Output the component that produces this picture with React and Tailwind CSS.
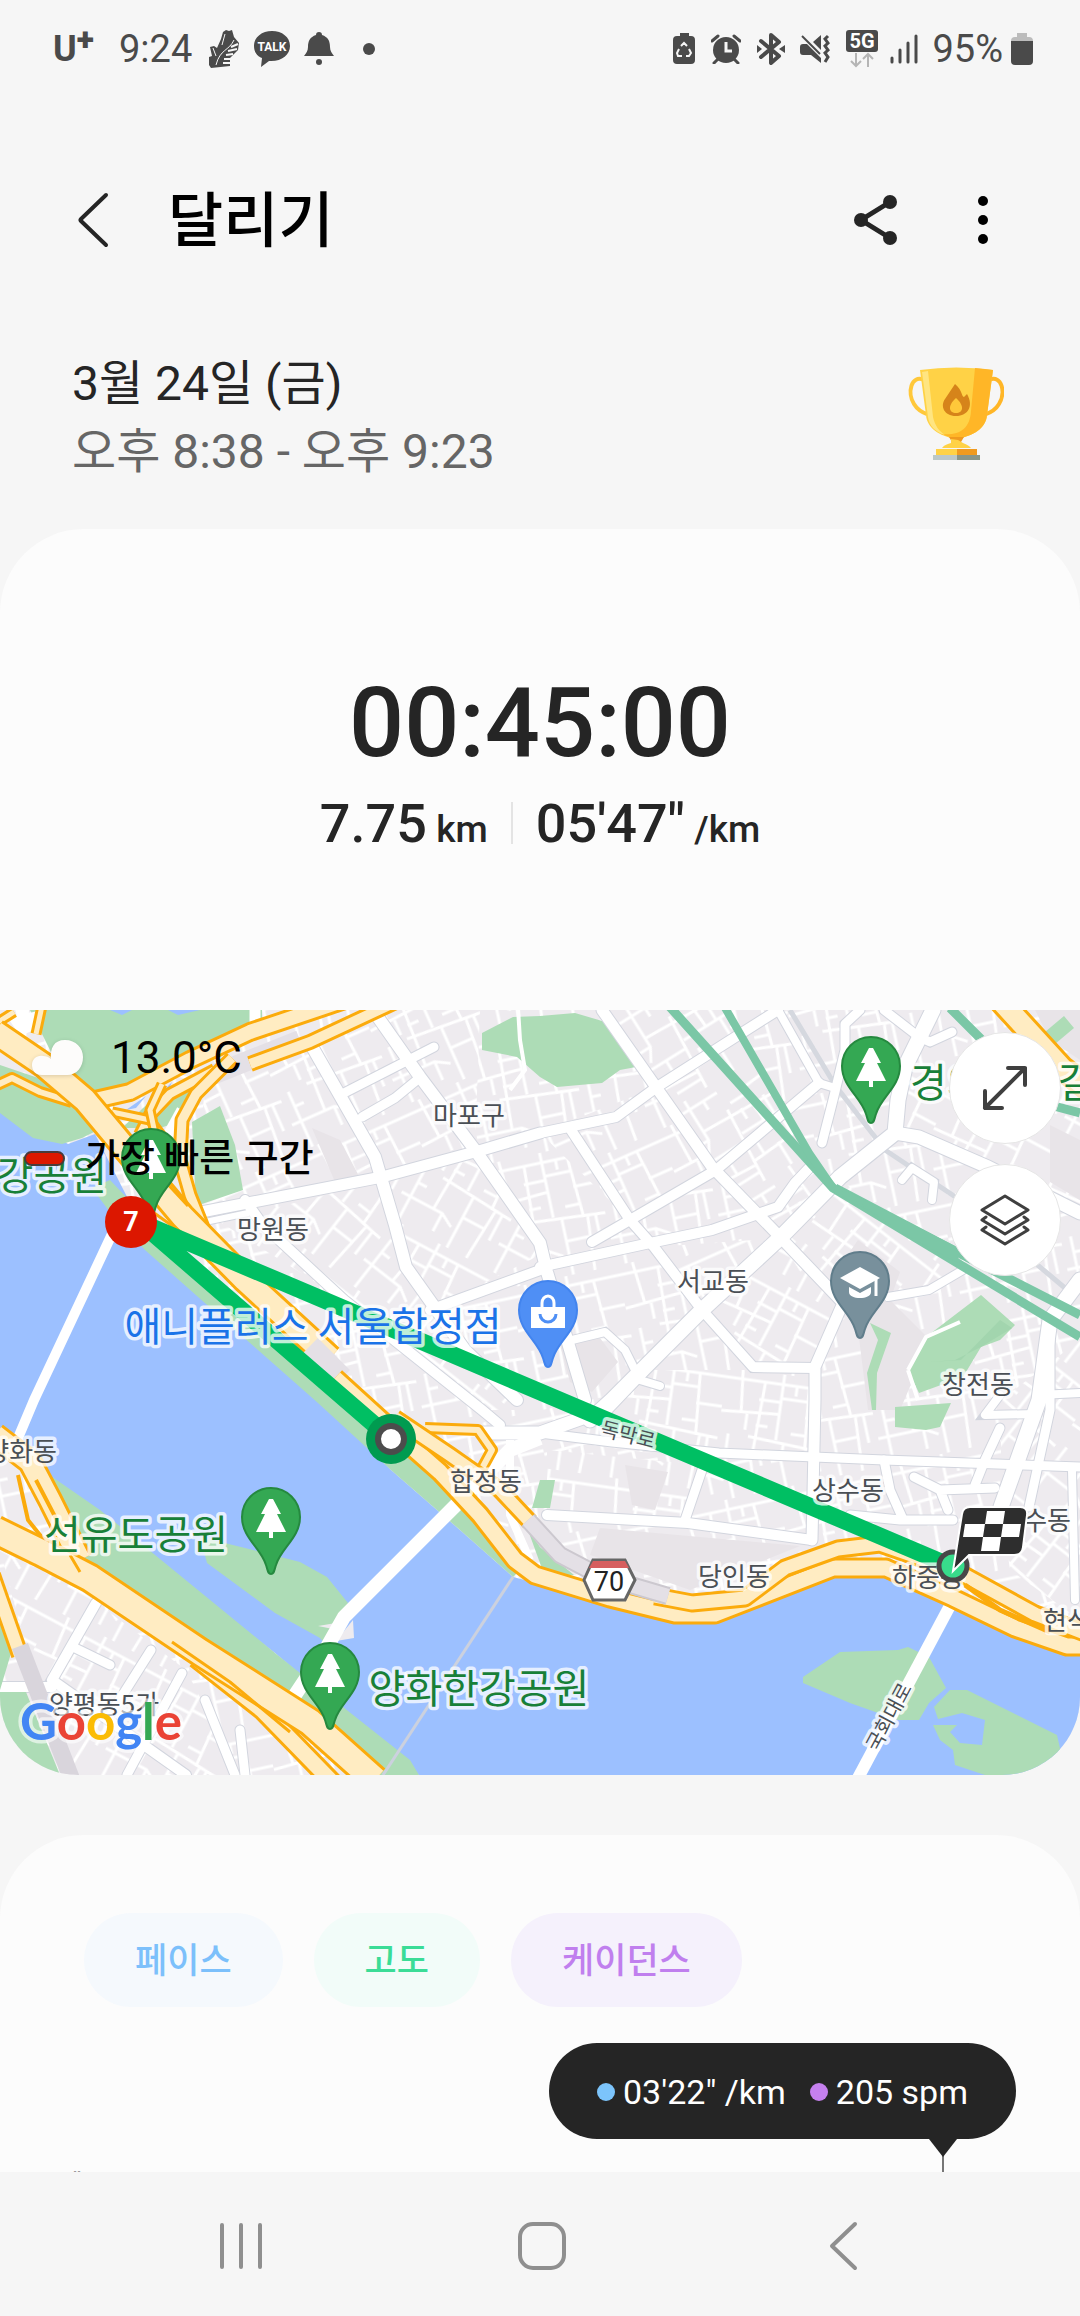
import { Fragment } from 'react';

const WATER = '#9cc0ff';
const PARK = '#addcb6';
const LAND = '#eeebef';

// one tile of back streets, turned by a different angle in each district
const STREET_ANGLES = [-24, -12, 28, 58, 8, 38];

const districts = [
  { angle: -24, points: '205,70 310,30 385,165 196,205' },
  { angle: -24, points: '310,30 380,0 480,0 475,140 385,165' },
  { angle: 28, points: '385,165 475,140 540,245 430,300 406,257' },
  { angle: 38, points: '220,212 385,170 406,257 465,340 517,400 480,400 344,290' },
  { angle: -24, points: '540,123 657,77 712,157 630,210' },
  { angle: 58, points: '602,0 724,0 833,178 781,228 712,157 657,77' },
  { angle: -24, points: '654,237 781,228 702,300' },
  { angle: -12, points: '540,257 650,235 702,300 612,390 540,380' },
  { angle: 38, points: '781,228 840,170 963,260 888,290 843,293' },
  { angle: 28, points: '702,300 781,228 843,293 815,357 753,357' },
  { angle: 28, points: '900,60 1080,60 1080,203 988,157 895,123' },
  { angle: 8, points: '555,430 605,400 643,360 812,360 812,440 700,450' },
  { angle: 8, points: '547,440 700,455 685,510 547,500' },
  { angle: 38, points: '1001,390 1080,330 1080,610 1010,560 1001,497' },
  { angle: 28, points: '0,540 80,580 186,660 240,765 60,765' },
];

const roads = [
  { w: 11, d: 'M602 0L712 157L781 228L843 293L815 357V390L812 530' },
  { w: 10, d: 'M540 123L616 107L657 77L726 33L778 0' },
  { w: 10, d: 'M592 232L630 210L716 160L760 123L819 73' },
  { w: 10, d: 'M571 120L630 210L654 237L702 300L753 357L815 358' },
  { w: 10, d: 'M540 257L650 233L712 220L778 197L795 173L812 155' },
  { w: 15, d: 'M590 410L612 390L702 300L781 227L840 167L895 123L898 90L905 57L933 0' },
  { w: 13, d: 'M895 123L919 127L988 157L1080 203' },
  { w: 9, d: 'M860 0L845 14V40L833 90L822 133' },
  { w: 9, d: 'M884 0L919 27L930 32L952 22' },
  { w: 8, d: 'M778 0L819 73L835 78' },
  { w: 8, d: 'M888 287L929 280L963 260' },
  { w: 8, d: 'M902 170L912 158L934 172L932 190' },
  { w: 15, d: 'M1080 270L1050 310L1039 390L1001 497' },
  { w: 9, d: 'M1050 320V400L1029 497' },
  { w: 8, d: 'M1039 385L1080 383M1000 385L985 405L1035 404' },
  { w: 12, d: 'M375 3L420 67L475 140L540 233L547 262L585 390' },
  { w: 12, d: 'M310 33L375 147L395 215L406 257L465 340L517 390' },
  { w: 11, d: 'M196 203L382 167L482 140L540 123' },
  { w: 6, d: 'M205 212L248 203' },
  { w: 10, d: 'M245 190L262 214L344 290L482 400L500 415' },
  { w: 10, d: 'M430 300L540 260' },
  { w: 9, d: 'M344 83L434 37M362 107L395 88L417 70' },
  { w: 8, d: 'M572 330L605 322L625 340L640 370L660 376' },
  { w: 13, d: 'M482 423H540L605 400L643 360' },
  { w: 9, d: 'M540 423L612 432L719 443L884 450L1080 457' },
  { w: 10, d: 'M547 505L688 513L812 530' },
  { w: 9, d: 'M702 460L685 510M884 450L890 480L902 507' },
  { w: 9, d: 'M850 505L900 510L953 510' },
  { w: 9, d: 'M914 467L940 480L948 500M940 480L995 478' },
  { w: 9, d: 'M1000 418L985 450L975 475' },
  { w: 8, d: 'M1072 460L1075 590' },
  { w: 10, d: 'M96 593L52 670L186 765M0 677L52 677' },
  { w: 9, d: 'M151 640L110 705M182 663L127 765M75 638L110 655' },
  { w: 9, d: 'M205 690L235 765M240 720L245 765' },
];

const pins = [
  { x: 151, y: 149, kind: 'tree' },
  { x: 871, y: 57, kind: 'tree' },
  { x: 271, y: 508, kind: 'tree' },
  { x: 330, y: 663, kind: 'tree' },
  { x: 548, y: 301, kind: 'shop' },
  { x: 860, y: 272, kind: 'school' },
];

const pinColors = {
  tree: ['#34a853', '#25893f'],
  shop: ['#4f8ff5', '#4284ee'],
  school: ['#78909c', '#607d8b'],
};

const townLabels = [
  { x: 469, y: 115, text: '마포구' },
  { x: 273, y: 229, text: '망원동' },
  { x: 713, y: 281, text: '서교동' },
  { x: 978, y: 384, text: '창전동' },
  { x: 57, y: 451, text: '양화동', anchor: 'end' },
  { x: 486, y: 481, text: '합정동' },
  { x: 848, y: 490, text: '상수동' },
  { x: 1071, y: 520, text: '수동', anchor: 'end' },
  { x: 734, y: 576, text: '당인동' },
  { x: 928, y: 577, text: '하중동' },
  { x: 1043, y: 620, text: '현석동', anchor: 'start' },
  { x: 104, y: 704, text: '양평동5가' },
];

const placeLabels = [
  { x: 107, y: 180, text: '강공원', anchor: 'end', color: '#188038' },
  { x: 910, y: 87, text: '경의선숲길', anchor: 'start', color: '#188038' },
  { x: 136, y: 539, text: '선유도공원', anchor: 'middle', color: '#188038' },
  { x: 479, y: 693, text: '양화한강공원', anchor: 'middle', color: '#188038' },
  { x: 313, y: 331, text: '애니플러스 서울합정점', anchor: 'middle', color: '#1a73e8' },
];

const chips = [
  { label: '페이스', className: 'bg-[#f5f9fd] text-[#7cc0fb]' },
  { label: '고도', className: 'bg-[#f2fcf9] text-[#3bdc97]' },
  { label: '케이던스', className: 'bg-[#f5f1fc] text-[#c07fee]' },
];

function Highway({ d, width = 22 }) {
  return (
    <>
      <path d={d} stroke="#fbab0c" strokeWidth={width + 6} />
      <path d={d} stroke="#ffecc2" strokeWidth={width} />
    </>
  );
}

function Pin({ x, y, kind }) {
  const [fill, stroke] = pinColors[kind];
  return (
    <g transform={`translate(${x} ${y})`}>
      <path
        d="M0 56C-3 56 -3 53 -5 47C-10 30 -29 20 -29 -1A29 29 0 0 1 29 -1C29 20 10 30 5 47C3 53 3 56 0 56Z"
        fill={fill}
        stroke={stroke}
        strokeWidth="2"
      />
      {kind === 'tree' && (
        <path d="M-2 -19H2L10 -4H6L15 14H2V20H-2V14H-15L-6 -4H-10Z" fill="#fff" />
      )}
      {kind === 'shop' && (
        <>
          <path d="M-17 -4H17V17H-17Z" fill="#fff" />
          <path d="M-6 -3V-8A6 7 0 0 1 6 -8V-3" fill="none" stroke="#fff" strokeWidth="3" />
          <path d="M-8 3A8 8 0 0 0 8 3" fill="none" stroke={fill} strokeWidth="3" />
        </>
      )}
      {kind === 'school' && (
        <>
          <path d="M0 -15L20 -4L0 7L-20 -4Z" fill="#fff" />
          <path d="M-11 5L0 11L11 5V10C11 18 -11 18 -11 10Z" fill="#fff" />
          <path d="M16 -3V14" stroke="#fff" strokeWidth="3" />
        </>
      )}
    </g>
  );
}

function RouteMap() {
  return (
    <svg viewBox="0 0 1080 765" className="block h-auto w-full" fill="none" role="img" aria-label="달리기 경로">
      <defs>
        {STREET_ANGLES.map((angle) => (
          <pattern
            key={angle}
            id={`streets${angle}`}
            width="110"
            height="126"
            patternUnits="userSpaceOnUse"
            patternTransform={`rotate(${angle})`}
          >
            <rect width="110" height="126" fill={LAND} />
            <path
              d="M0 10H110M0 44L58 40M30 66L110 72M58 24H84M0 98H46L60 106M16 0L20 44M40 10L36 98M58 0V66M84 10L88 72M10 66V126M66 70V126M92 72L88 126M66 92H90M36 28H58M84 40H110M88 58H72M20 82H10M36 54H48M100 72V100M46 98V118M26 44V60M72 10V20"
              stroke="#fff"
              strokeWidth="3"
            />
          </pattern>
        ))}
      </defs>

      <rect width="1080" height="765" fill="url(#streets-12)" />
      {districts.map((area) => (
        <polygon key={area.points} points={area.points} fill={`url(#streets${area.angle})`} />
      ))}

      {/* large blocks without back streets */}
      <path
        d="M844 250L858 230L900 262L890 290L930 330L900 400H868L858 320ZM625 455L668 462L655 500L632 495ZM560 335L600 328L618 352L592 382L570 372ZM312 118L340 130L360 168L335 172ZM1050 115L1080 130V190L1050 172ZM1035 0H1080V50L1050 30ZM600 518L800 536L690 580L590 545Z"
        fill="#e8e4e8"
      />
      <path
        d="M482 23L513 7L540 6L575 3L609 13L636 57L620 60L602 73L557 77L540 67L517 47L482 40Z"
        fill={PARK}
      />
      <path
        d="M981 285L1015 315L1000 330L981 337L963 367L919 383L908 360L926 327ZM870 313L891 323L877 363L876 400H872L867 363L878 330ZM895 397L951 393L940 417L926 420L895 417Z"
        fill={PARK}
      />
      <path d="M961 350L1000 310L1012 318L981 337L955 350L930 352Z" fill="#a2d5ae" />
      <path d="M540 470H555L550 498H532ZM1045 22L1064 6L1074 18L1055 34Z" fill={PARK} />
      <path d="M790 0L835 75L885 140L960 190L1065 278" stroke="#d5d8df" strokeWidth="5" />

      {roads.map((road) => (
        <path key={road.d} d={road.d} stroke="#d2d5de" strokeWidth={road.w + 2} strokeLinecap="round" />
      ))}
      {roads.map((road) => (
        <path key={road.d} d={road.d} stroke="#fff" strokeWidth={road.w} strokeLinecap="round" strokeLinejoin="round" />
      ))}
      <path d="M518 -2L520 30L525 60L510 80M908 360L926 327L960 312M908 360L918 390" stroke="#fff" strokeWidth="4" />

      {/* rail lines */}
      <g stroke="#7bc7a6" strokeWidth="9">
        <path d="M669 -4L833 178L1080 327" />
        <path d="M724 -4L809 143L833 178" strokeWidth="8" />
        <path d="M835 178L953 240L1080 305" />
        <path d="M950 -2L985 33M1050 95L1080 103" />
      </g>
      <path d="M833 174L955 236L960 254L900 222Z" fill="#7bc7a6" />

      {/* river and its parks */}
      <path
        d="M0 95L68 134L95 124L150 232L335 400L391 460L460 520L513 567L609 592L678 606L712 606L833 560H884L953 594L1015 620L1080 640V765H419L275 643L52 470L0 427Z"
        fill={WATER}
      />
      <path d="M30 0H262L262 18L200 50L100 92L60 60Z" fill={PARK} />
      <path d="M110 0H132L122 5ZM168 0H200L178 5Z" fill={WATER} />
      <path d="M122 118L160 82L200 62L185 110L160 118Z" fill={PARK} />
      <path d="M126 100L146 86L136 98ZM160 84L172 72L165 88Z" fill={WATER} />
      <path d="M0 55L50 72L98 120L82 128L62 134L33 128L0 103Z" fill={PARK} />
      <path d="M192 112L220 96L235 135L243 180L196 196Z" fill={PARK} />
      <path d="M92 178L110 170L165 228L391 418L470 490L520 560L513 567L460 520L391 460L318 393L145 240L112 205Z" fill={PARK} />
      <path d="M540 537L574 565L545 567L528 520Z" fill={PARK} />
      <path d="M48 464L100 500L275 643L300 663L410 750L419 765H360L180 640L100 570L50 520Z" fill={PARK} />
      <path d="M0 575L12 640L0 680ZM0 682H26L60 765H0Z" fill={PARK} />
      <path d="M200 527L241 537L300 552L327 567L348 593L344 608L330 640L320 628L275 603L207 553Z" fill={PARK} />
      <path d="M353 610L354 628L336 631ZM318 616L342 612L338 620Z" fill={LAND} />
      <path
        d="M803 667L840 642L898 640L908 637L929 647L946 678L929 693L919 710H898L850 693L803 673Z"
        fill={PARK}
      />
      <path
        d="M934 697L950 680H967L1057 725L1066 765H985L955 755L953 740L940 730L933 715H957L950 722L960 733L982 735L985 710L962 703L938 709Z"
        fill={PARK}
      />

      {/* bridges */}
      <path d="M513 567L383 765" stroke="#ccd1de" strokeWidth="3" />
      <path d="M128 190L34 390L18 428" stroke="#fff" strokeWidth="10" />
      <path d="M182 100L160 140" stroke="#fff" strokeWidth="11" />
      <path d="M540 428L510 440L458 493L344 607L327 637L285 700" stroke="#fff" strokeWidth="14" strokeLinejoin="round" />
      <path d="M953 590L858 768" stroke="#fff" strokeWidth="12" />
      <path d="M24 -4L20 32M255 -4V24" stroke="#fff" strokeWidth="11" />
      <path d="M8 8L42 0L34 20L20 26Z" fill="#fff" />
      <path d="M510 430V505L530 550" stroke="#fff" strokeWidth="8" />

      {/* expressways */}
      <g strokeLinejoin="round">
        <path d="M200 70L300 30" stroke="#e4e0e6" strokeWidth="20" />
        <Highway d="M-5 14L14 2M42 -4L36 24" width={5} />
        <Highway d="M-5 76L12 68L40 82L72 92" width={6} />
        <Highway d="M400 -10L310 32L250 54" width={10} />
        <Highway d="M345 -10L250 22L190 50L130 82L95 90" width={14} />
        <Highway d="M215 60L170 84L150 105L140 125" width={8} />
        <Highway d="M112 102L150 110L165 130" width={5} />
        <Highway d="M232 48L196 84L182 110L180 150L190 185L206 225" width={9} />
        <Highway d="M162 74L150 100L156 128" width={5} />
        <Highway d="M-5 22L45 56L85 90L135 150L182 206L245 270L330 348" />
        <path d="M162 168L188 196M150 200L185 225" stroke="#fbab0c" strokeWidth="3" />
        <path d="M308 338L340 370" stroke="#e4e0e6" strokeWidth="28" />
        <Highway d="M425 418L478 420L492 440L480 462" width={6} />
        <Highway d="M335 368L390 418L440 462L480 505L515 550L535 565L610 588L675 604H715L833 558H886L953 588L1015 618L1067 636H1090" width={15} />
        <Highway d="M395 408L450 445L500 480L530 512" width={12} />
        <Highway d="M655 586L692 593L745 588L785 558L838 539L880 534L955 560L1035 604L1090 625" width={13} />
        <path d="M528 510L560 545L600 566L668 586" stroke="#ccc8cf" strokeWidth="18" />
        <path d="M528 510L560 545L600 566L668 586" stroke="#e4e0e6" strokeWidth="14" />
        <path d="M965 575L1000 600L1050 622" stroke="#fbab0c" strokeWidth="5" />
        <Highway d="M-5 425L30 452L50 490L80 550" width={20} />
        <path d="M18 465L28 510L48 535M36 470L62 520" stroke="#fbab0c" strokeWidth="4" />
        <Highway d="M196 648L262 700L335 775" width={15} />
        <Highway d="M-5 520L40 542L90 568L200 642L310 712L375 770" width={25} />
        <path d="M172 632L230 672L290 722M70 545L80 562" stroke="#fbab0c" strokeWidth="3" />
        <Highway d="M-8 565L20 645" width={12} />
        <path d="M20 636L72 770" stroke="#d9d5dc" strokeWidth="17" />
        <Highway d="M1000 -10L1062 58L1090 80" width={20} />
      </g>

      {/* the run itself */}
      <path d="M391 429L140 212L953 557" stroke="#00bf63" strokeWidth="17" strokeLinejoin="bevel" />

      <g fontFamily="'Noto Sans CJK KR', sans-serif" stroke="#fff" strokeOpacity="0.75" strokeWidth="7" strokeLinejoin="round" paintOrder="stroke">
        {townLabels.map((t) => (
          <text key={t.text} x={t.x} y={t.y} fontSize="26" textAnchor={t.anchor || 'middle'} fill="#4a4f55">
            {t.text}
          </text>
        ))}
        <text x="628" y="432" fontSize="20" textAnchor="middle" fill="#4a4f55" transform="rotate(14 628 425)">
          독막로
        </text>
        <text x="889" y="714" fontSize="20" textAnchor="middle" fill="#4a4f55" transform="rotate(-62 889 707)">
          국회대로
        </text>
        {placeLabels.map((p) => (
          <text key={p.text} x={p.x} y={p.y} fontSize="40" textAnchor={p.anchor} fill={p.color}>
            {p.text}
          </text>
        ))}
      </g>

      {pins.map((pin) => (
        <Pin key={`${pin.x}-${pin.y}`} {...pin} />
      ))}

      {/* road shield */}
      <path d="M593 550H625L635 570L625 590H593L584 570Z" fill="#fff" stroke="#666" strokeWidth="3" />
      <path d="M593 551H625L629 558H589Z" fill="#d65f5f" />
      <text x="609" y="581" fontSize="27" textAnchor="middle" fill="#222" fontFamily="Roboto, sans-serif">
        70
      </text>

      {/* 7 km, start and finish markers */}
      <circle cx="131" cy="212" r="26" fill="#dc1700" />
      <text x="131" y="221" fontSize="27" fontWeight="700" textAnchor="middle" fill="#fff" fontFamily="Roboto, sans-serif">
        7
      </text>
      <circle cx="391" cy="429" r="25" fill="#009b50" />
      <circle cx="391" cy="429" r="13" fill="#fff" stroke="#4c4c4c" strokeWidth="6" />
      <circle cx="953" cy="556" r="14" fill="#38dc8b" stroke="#484848" strokeWidth="5" />
      <path
        d="M953 561L962 504Q963 497 970 497H1020Q1028 497 1027 505L1023 537Q1022 545 1014 545H969Z"
        fill="#2e2e2e"
        stroke="#fff"
        strokeWidth="2"
      />
      <path d="M987 501H1005L1003 514H985ZM965 514H985L983 527H963ZM1003 514H1021L1019 527H1001ZM983 527H1001L999 541H981Z" fill="#fff" />

      <text
        x="20"
        y="730"
        fontSize="51"
        fontWeight="700"
        fontFamily="Lato, sans-serif"
        stroke="#fff"
        strokeOpacity="0.6"
        strokeWidth="7"
        strokeLinejoin="round"
        paintOrder="stroke"
      >
        <tspan fill="#4285f4">G</tspan>
        <tspan fill="#ea4335">o</tspan>
        <tspan fill="#fbbc05">o</tspan>
        <tspan fill="#4285f4">g</tspan>
        <tspan fill="#34a853">l</tspan>
        <tspan fill="#ea4335">e</tspan>
      </text>
    </svg>
  );
}

function StatusBar() {
  return (
    <div className="flex h-[98px] items-center justify-between pr-[47px] pl-[53px] text-[38px] leading-none text-[#4a4a4a]">
      <div className="flex items-center">
        <span className="flex w-[66px] items-start text-[36px] font-bold">
          U<span className="-mt-2 text-[32px] font-black">+</span>
        </span>
        <span>9:24</span>
        <svg viewBox="0 0 32 40" className="ml-4 h-10 w-8" fill="none">
          <path d="M15 3L18 1L21 2L24 1L26 8L31 14L30 21L22 29V37L3 39L1 36V28L4 27L2 18L6 17L9 19L13 10Z" fill="#4a4a4a" />
          <path d="M26 11C21 22 12 20 8 36M5 19L8 27M17 5L14 16" stroke="#f6f6f6" strokeWidth="1" />
          <path d="M23 18L30 15M20 22L29 20M18 26L25 25M16 30L22 30M15 34L22 34" stroke="#f6f6f6" strokeWidth="2" />
        </svg>
        <svg viewBox="0 0 38 38" className="ml-[13px] h-[38px] w-[38px]">
          <path d="M19 1C9 1 1 7 1 16C1 22 4 26 9 28L8 37L16 31C28 32 37 25 37 16C37 7 29 1 19 1Z" fill="#4a4a4a" />
          <text x="19" y="21" fontSize="12" fontWeight="700" textAnchor="middle" fill="#fff" fontFamily="Roboto, sans-serif">
            TALK
          </text>
        </svg>
        <svg viewBox="0 0 30 34" className="ml-[13px] h-[34px] w-[30px]" fill="#4a4a4a">
          <path d="M15 0C17 0 18 1 18 3C24 5 26 9 26 15C26 19 28 21 30 24H0C2 21 4 19 4 15C4 9 6 5 12 3C12 1 13 0 15 0Z" />
          <circle cx="15" cy="30" r="3" />
        </svg>
        <span className="ml-[29px] h-3 w-3 rounded-full bg-[#4a4a4a]" />
      </div>
      <div className="flex items-center">
        <svg viewBox="0 0 22 32" className="h-8 w-[22px]" fill="none">
          <path d="M7 0H16V3H18Q22 3 22 7V27Q22 31 18 31H4Q0 31 0 27V7Q0 3 4 3H7Z" fill="#4a4a4a" />
          <path d="M8 13L11 10L14 13M16 16L18 20L16 23H13M9 23H5L4 20L6 16" stroke="#f6f6f6" strokeWidth="2" />
        </svg>
        <svg viewBox="0 0 30 30" className="ml-4 h-[30px] w-[30px]" fill="none">
          <circle cx="15" cy="16" r="13" fill="#4a4a4a" />
          <path d="M1 7L7 2M29 7L23 2M3 29L7 25M27 29L23 25" stroke="#4a4a4a" strokeWidth="3" strokeLinecap="round" />
          <path d="M15 8V17H21" stroke="#f6f6f6" strokeWidth="3" />
        </svg>
        <svg viewBox="0 0 28 32" className="ml-4 h-8 w-7" fill="none">
          <path d="M4 8L22 23L14 30V2L22 9L4 24" stroke="#4a4a4a" strokeWidth="4" strokeLinejoin="round" strokeLinecap="round" />
          <path d="M0 12L5 16L0 20ZM28 12L22 16L28 20Z" fill="#4a4a4a" />
        </svg>
        <svg viewBox="0 0 30 30" className="ml-[15px] h-[30px] w-[30px]" fill="none">
          <path d="M0 13Q0 10 3 10H7L21 24V29L11 21H3Q0 21 0 18ZM13 8L21 1V16Z" fill="#4a4a4a" />
          <path d="M2 2L20 20" stroke="#4a4a4a" strokeWidth="2" />
          <path d="M28 2L25 5L28 9L25 12L28 16L25 19L28 23L25 28" stroke="#4a4a4a" strokeWidth="3" />
        </svg>
        <svg viewBox="0 0 32 38" className="ml-4 h-[38px] w-8" fill="none">
          <rect width="32" height="22" rx="3" fill="#4a4a4a" />
          <text x="16" y="18" fontSize="20" fontWeight="700" textAnchor="middle" fill="#fff" fontFamily="Roboto, sans-serif">
            5G
          </text>
          <path d="M10 23V36M5 31L10 36L15 31M22 37V24M17 29L22 24L27 29" stroke="#b5b5b5" strokeWidth="2" />
        </svg>
        <svg viewBox="0 0 28 30" className="ml-3 h-[30px] w-7" stroke="#4a4a4a" strokeWidth="3" strokeLinecap="round">
          <path d="M2 24V28M10 16V28M18 9V28M26 2V28" />
        </svg>
        <span className="ml-[14px]">95%</span>
        <svg viewBox="0 0 22 32" className="ml-2 h-8 w-[22px]">
          <path d="M6 0H16V4H18Q22 4 22 8V10H0V8Q0 4 4 4H6Z" fill="#bcbcbc" />
          <path d="M0 8H22V28Q22 32 18 32H4Q0 32 0 28Z" fill="#4a4a4a" />
        </svg>
      </div>
    </div>
  );
}

function Trophy() {
  return (
    <svg viewBox="17 18 96 94" className="mt-[17px] h-[94px] w-24" fill="none" role="img" aria-label="트로피">
      <path d="M33 31C20 25 16 44 23 55C26 60 30 63 36 65" stroke="#ffc83a" strokeWidth="4" />
      <path d="M98 31C111 25 115 44 108 55C105 60 101 63 95 65" stroke="#ffb627" strokeWidth="4" />
      <path d="M29 21Q65 16 102 21L96 66C95 79 83 87 65 90C48 87 36 79 35 66Z" fill="#ffd246" />
      <path d="M84 19Q95 20 102 21L96 66C95 79 83 87 65 90L50 85C68 87 79 80 80 62Z" fill="#ffb627" />
      <path d="M31 23L37 22L42 68C44 77 48 82 54 86C44 83 38 76 37 68Z" fill="#ffe581" />
      <path d="M58 88H73L70 93H61Z" fill="#f09a1f" />
      <path d="M60 90L67 91L72 94C76 96 79 97 80 99H51C53 96 57 95 60 94Z" fill="#ffd246" />
      <path d="M64 35C72 42 70 47 73 48L76 45C83 57 77 67 65 67C53 67 49 57 54 50Z" fill="#d6841a" />
      <path d="M65 49C74 57 72 64 65 64C58 64 56 57 65 49Z" fill="#ffc83a" />
      <path d="M45 100H66V106H45Z" fill="#ffd246" />
      <path d="M66 100H86V106H66Z" fill="#f09a1f" />
      <path d="M42 106H66V111H42Z" fill="#bcc8c8" />
      <path d="M66 106H89V111H66Z" fill="#8a9688" />
    </svg>
  );
}

export default function App() {
  return (
    <div className="flex min-h-screen flex-col bg-[#f6f6f6] font-[Roboto,'Noto_Sans_CJK_KR',sans-serif] text-[#252525]">
      <StatusBar />

      <header className="flex h-[244px] items-center justify-between pr-[72px] pl-[76px]">
        <div className="flex items-center gap-14">
          <button type="button" aria-label="뒤로">
            <svg viewBox="0 0 36 58" className="h-[58px] w-9" fill="none">
              <path d="M30 4L5 28Q4 29 5 30L30 54" stroke="#252525" strokeWidth="4" strokeLinecap="round" />
            </svg>
          </button>
          <h1 className="pt-1 text-[60px] font-medium text-black">달리기</h1>
        </div>
        <div className="flex items-center gap-[58px]">
          <button type="button" aria-label="공유">
            <svg viewBox="0 0 48 52" className="h-[52px] w-12" fill="#252525">
              <path d="M38 8L9 26L38 44" fill="none" stroke="#252525" strokeWidth="5" />
              <circle cx="9" cy="26" r="7" />
              <circle cx="38" cy="8" r="7" />
              <circle cx="38" cy="44" r="7" />
            </svg>
          </button>
          <button type="button" aria-label="더보기" className="px-2">
            <svg viewBox="0 0 34 52" className="h-[52px] w-[34px]" fill="#000">
              <circle cx="17" cy="7" r="5" />
              <circle cx="17" cy="26" r="5" />
              <circle cx="17" cy="45" r="5" />
            </svg>
          </button>
        </div>
      </header>

      <div className="flex items-start justify-between pt-2 pr-[76px] pb-[43px] pl-[72px] text-[48px] leading-[68px]">
        <div>
          <p>3월 24일 (금)</p>
          <p className="text-[#666]">오후 8:38 - 오후 9:23</p>
        </div>
        <Trophy />
      </div>

      <section className="rounded-[84px] bg-[#fcfcfc]">
        <div className="flex flex-col items-center pt-[134px] pb-[147px] font-medium">
          <p className="text-[97px] leading-[120px]">00:45:00</p>
          <div className="flex h-20 items-center text-[54px]">
            <p>
              7.75 <span className="-ml-1 text-[37px]">km</span>
            </p>
            <span className="mx-[23px] h-[42px] w-[2px] bg-[#e4e4e4]" />
            <p>
              05'47" <span className="-ml-1 text-[37px]">/km</span>
            </p>
          </div>
        </div>

        <div className="relative overflow-hidden rounded-b-[78px]">
          <RouteMap />
          <div className="absolute top-5 left-6 flex flex-col gap-11 text-black">
            <div className="flex items-center gap-[27px] pl-2">
              <svg viewBox="0 0 52 36" className="h-9 w-[52px] drop-shadow-sm" fill="#fdfcfb">
                <path d="M10 35C3 35 0 30 0 25C0 19 5 15 11 16C14 16 17 17 19 19C18 8 22 0 33 0C44 0 51 8 51 17C51 27 45 35 35 35Z" />
              </svg>
              <span className="text-[44px] leading-[56px]">13.0°C</span>
            </div>
            <div className="flex items-center gap-[20px]">
              <span className="h-[15px] w-[41px] rounded-full border-2 border-[#4a3a3a] bg-[#dc1700]" />
              <span className="text-[38px] leading-[56px] font-medium">가장 빠른 구간</span>
            </div>
          </div>
          <div className="absolute top-[22px] right-[19px] flex flex-col gap-5">
            <button
              type="button"
              aria-label="지도 확대"
              className="flex h-28 w-28 items-center justify-center rounded-full border border-[#e6e6e6] bg-white"
            >
              <svg viewBox="0 0 46 46" className="h-[46px] w-[46px]" fill="none" stroke="#3f3f3f" strokeWidth="4" strokeLinecap="round" strokeLinejoin="round">
                <path d="M26 3H43V20M43 3L3 43M3 26V43H20" />
              </svg>
            </button>
            <button
              type="button"
              aria-label="지도 유형"
              className="flex h-28 w-28 items-center justify-center rounded-full border border-[#e6e6e6] bg-white"
            >
              <svg viewBox="0 0 50 52" className="h-[52px] w-[50px]" fill="none" stroke="#3f3f3f" strokeWidth="3" strokeLinejoin="round" strokeLinecap="round">
                <path d="M25 2L48 16L25 30L2 16ZM6 23L2 26L25 40L48 26L44 23M6 33L2 36L25 50L48 36L44 33" />
              </svg>
            </button>
          </div>
        </div>
      </section>

      <section className="mt-[60px] flex flex-1 flex-col rounded-t-[84px] bg-[#fcfcfc] pt-[78px]">
        <div className="flex gap-[31px] px-[84px]">
          {chips.map((chip) => (
            <button
              key={chip.label}
              type="button"
              className={`h-[94px] rounded-full px-[51px] pt-1 text-[35px] font-medium ${chip.className}`}
            >
              {chip.label}
            </button>
          ))}
        </div>
        <div className="mt-9 mr-16 flex h-24 items-center self-end rounded-full bg-[#252525] px-12 pt-[2px] text-[34px] text-white">
          {[
            { dot: 'bg-[#7cc4fb]', value: '03\'22" /km' },
            { dot: 'ml-6 bg-[#c580ee]', value: '205 spm' },
          ].map((item) => (
            <Fragment key={item.value}>
              <span className={`mr-2 h-[18px] w-[18px] rounded-full ${item.dot}`} />
              <span>{item.value}</span>
            </Fragment>
          ))}
        </div>
        <div className="flex h-[33px] items-start justify-between overflow-hidden pr-[123px] pl-[72px]">
          <span className="mt-7 text-[30px] leading-8 text-[#999]">"</span>
          <svg viewBox="0 0 28 33" className="h-[33px] w-7">
            <path d="M14 16V33" stroke="#777" strokeWidth="2" />
            <path d="M0 0H28L14 18Z" fill="#252525" />
          </svg>
        </div>
      </section>

      <nav className="flex h-36 items-center bg-[#f6f6f6] pt-1 pr-[86px] pl-[90px]" aria-label="시스템">
        <button type="button" aria-label="최근 앱" className="flex flex-1 justify-center">
          <svg viewBox="0 0 46 50" className="h-[50px] w-[46px]" stroke="#8f8f8f" strokeWidth="4" strokeLinecap="round">
            <path d="M4 4V46M23 4V46M42 4V46" />
          </svg>
        </button>
        <button type="button" aria-label="홈" className="flex flex-1 justify-center">
          <span className="h-12 w-12 rounded-[15px] border-4 border-[#8f8f8f]" />
        </button>
        <button type="button" aria-label="뒤로 가기" className="flex flex-1 justify-center">
          <svg viewBox="0 0 30 50" className="h-[50px] w-[30px]" fill="none" stroke="#8f8f8f" strokeWidth="4" strokeLinecap="round" strokeLinejoin="round">
            <path d="M27 3L4 25L27 47" />
          </svg>
        </button>
      </nav>
    </div>
  );
}
